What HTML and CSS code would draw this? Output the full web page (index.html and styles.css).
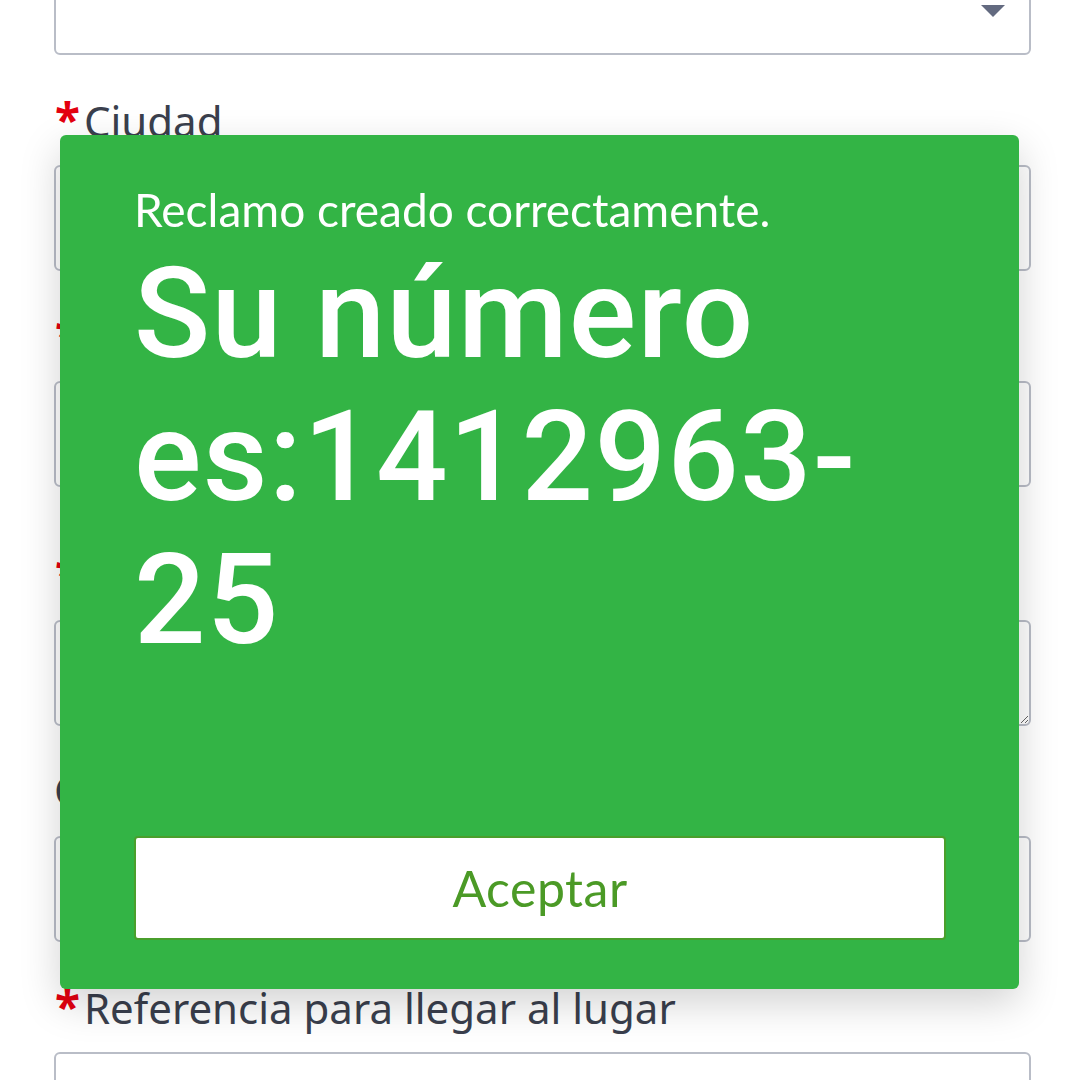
FILE: index.html
```html
<!DOCTYPE html>
<html lang="es">
<head>
  <meta charset="UTF-8" />
  <meta name="viewport" content="width=device-width, initial-scale=1.0" />
  <title>Nuevo reclamo</title>
  <link rel="stylesheet" href="styles.css">
</head>
<body>
  <form class="form">
    <div class="field">
      <div class="select"><span class="caret"></span></div>
    </div>

    <div class="field">
      <label><span class="req">*</span>Ciudad</label>
      <input type="text" />
    </div>

    <div class="field">
      <label><span class="req">*</span>Dirección</label>
      <input type="text" />
      <div class="hint"></div>
    </div>

    <div class="field">
      <label><span class="req">*</span>Descripción</label>
      <textarea rows="2"></textarea>
    </div>

    <div class="field">
      <label>Correo electrónico</label>
      <input type="text" />
    </div>

    <div class="field">
      <label><span class="req">*</span>Referencia para llegar al lugar</label>
      <input type="text" />
    </div>
  </form>

  <div class="modal">
    <p class="modal-sub">Reclamo creado correctamente.</p>
    <p class="modal-title">Su número es:1412963-<wbr>25</p>
    <button type="button" class="modal-btn">Aceptar</button>
  </div>
</body>
</html>
```

FILE: styles.css
```css
body {
  margin: 0;
  background: #fff;
  font-family: "Noto Sans", Lato, sans-serif;
  color: #3a3f4d;
  overflow: hidden;
}

.form {
  margin-top: -51px;
  padding: 0 49px 0 54px;
}

.field label {
  display: block;
  margin-top: 40px;
  margin-bottom: 22px;
  height: 48px;
  line-height: 48px;
  font-size: 42px;
  white-space: nowrap;
}

.field:first-child label { margin-top: 0; }

.req {
  color: #e3000f;
  font-size: 46px;
  font-weight: 700;
  margin-left: 1px;
  margin-right: 4px;
}

.select, input[type="text"], textarea {
  display: block;
  box-sizing: border-box;
  width: 100%;
  height: 106px;
  border: 2px solid #b9bdc7;
  border-radius: 6px;
  background: #fff;
  font: inherit;
  resize: vertical;
}

.select { position: relative; }

.caret {
  position: absolute;
  right: 24px;
  bottom: 36px;
  border-left: 12px solid transparent;
  border-right: 12px solid transparent;
  border-top: 12px solid #636a80;
}

.hint { height: 23px; }

.modal {
  position: fixed;
  left: 60px;
  top: 135px;
  width: 959px;
  height: 854px;
  box-sizing: border-box;
  padding: 47px 73px 49px 74px;
  display: flex;
  flex-direction: column;
  background: #33b445;
  border-radius: 6px;
  box-shadow: 0 14px 40px rgba(0, 0, 0, 0.18);
  color: #fff;
  font-family: Lato, "Noto Sans", sans-serif;
}

.modal p { margin: 0; }

.modal-sub {
  font-size: 46px;
  line-height: 56px;
}

.modal-title {
  margin-top: 5px !important;
  font-family: Roboto, Lato, sans-serif;
  font-weight: 500;
  font-size: 126px;
  line-height: 143px;
  letter-spacing: 1.2px;
}

.modal-btn {
  margin-top: auto;
  height: 104px;
  background: #fff;
  border: 2px solid #4a9f2c;
  border-radius: 4px;
  color: #4b9a26;
  font-family: inherit;
  font-size: 50px;
  letter-spacing: 0.5px;
}
```
